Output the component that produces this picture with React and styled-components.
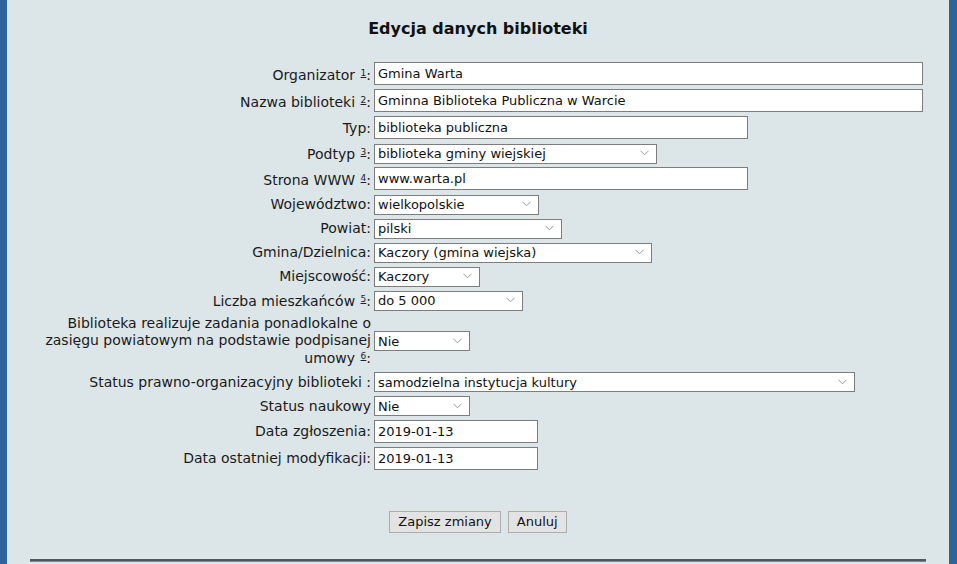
import React from "react";
import styled, { createGlobalStyle } from "styled-components";

const GlobalStyle = createGlobalStyle`
  html, body {
    margin: 0;
    padding: 0;
    background: #dce6e9;
  }
  body {
    font-family: "DejaVu Sans", Verdana, sans-serif;
    color: #111;
  }
`;

const Page = styled.div`
  display: flex;
  min-height: 564px;
  background: #dce6e9;
`;

const SideBar = styled.div`
  flex: 0 0 ${(p) => p.w}px;
  background: #2f6499;
`;

const Content = styled.div`
  flex: 1;
  display: flex;
  flex-direction: column;
`;

const Title = styled.h2`
  margin: 0;
  padding-top: 18px;
  font-size: 16px;
  line-height: 22px;
  font-weight: bold;
  text-align: center;
  color: #111;
`;

const FormGrid = styled.div`
  display: grid;
  grid-template-columns: 327px 1fr;
  column-gap: 3px;
  row-gap: 2px;
  margin: 21px 0 0 37px;
`;

const Label = styled.div`
  align-self: center;
  text-align: right;
  white-space: nowrap;
  font-size: 14px;
  line-height: ${(p) => (p.multi ? "16.5px" : "16px")};
  padding: ${(p) => (p.multi ? "2px 0" : "1px 0")};
  color: #1a1a1a;
`;

const Note = styled.a`
  font-size: 9px;
  vertical-align: 4px;
  text-decoration: underline;
  color: #222;
  margin-left: 1px;
`;

const Cell = styled.div`
  align-self: center;
  padding: 1px 0;
  display: flex;
`;

const TextInput = styled.input`
  box-sizing: border-box;
  width: ${(p) => p.w}px;
  height: 23px;
  border: 1px solid #7d7d7d;
  background: #fff;
  padding: 0 3px;
  font-family: "DejaVu Sans", Verdana, sans-serif;
  font-size: 13px;
  color: #111;
  outline: none;
`;

const SelectWrap = styled.span`
  position: relative;
  display: inline-block;
  width: ${(p) => p.w}px;
  height: 20px;
`;

const Select = styled.select`
  appearance: none;
  -webkit-appearance: none;
  box-sizing: border-box;
  width: 100%;
  height: 20px;
  border: 1px solid #7d7d7d;
  border-radius: 0;
  background: #fff;
  padding: 0 18px 0 3px;
  font-family: "DejaVu Sans", Verdana, sans-serif;
  font-size: 13px;
  color: #111;
  outline: none;
`;

const Chevron = styled.svg`
  position: absolute;
  right: 8px;
  top: 7px;
  pointer-events: none;
`;

const Buttons = styled.div`
  display: flex;
  justify-content: center;
  gap: 7px;
  margin-top: 40px;
`;

const Button = styled.button`
  height: 22px;
  padding: 0 8px;
  background: #e3e3e3;
  border: 1px solid #adadad;
  border-radius: 0;
  font-family: "DejaVu Sans", Verdana, sans-serif;
  font-size: 13px;
  color: #111;
`;

const Rule = styled.hr`
  margin: 26px 23px 0 23px;
  height: 0;
  border: none;
  border-top: 2px solid #4f5862;
  border-bottom: 1px solid #7c858e;
`;

function Dropdown({ w, value }) {
  return (
    <SelectWrap w={w}>
      <Select defaultValue={value}>
        <option>{value}</option>
      </Select>
      <Chevron width="9" height="6" viewBox="0 0 9 6">
        <path d="M0.5 0.8 L4.5 4.8 L8.5 0.8" fill="none" stroke="#999" strokeWidth="1" />
      </Chevron>
    </SelectWrap>
  );
}

const fields = [
  { label: "Organizator", note: "1", type: "text", w: 549, value: "Gmina Warta" },
  { label: "Nazwa biblioteki", note: "2", type: "text", w: 549, value: "Gminna Biblioteka Publiczna w Warcie" },
  { label: "Typ", type: "text", w: 374, value: "biblioteka publiczna" },
  { label: "Podtyp", note: "3", type: "select", w: 283, value: "biblioteka gminy wiejskiej" },
  { label: "Strona WWW", note: "4", type: "text", w: 374, value: "www.warta.pl" },
  { label: "Województwo", type: "select", w: 165, value: "wielkopolskie" },
  { label: "Powiat", type: "select", w: 188, value: "pilski" },
  { label: "Gmina/Dzielnica", type: "select", w: 278, value: "Kaczory (gmina wiejska)" },
  { label: "Miejscowość", type: "select", w: 106, value: "Kaczory" },
  { label: "Liczba mieszkańców", note: "5", type: "select", w: 149, value: "do 5 000" },
  {
    label: ["Biblioteka realizuje zadania ponadlokalne o", "zasięgu powiatowym na podstawie podpisanej", "umowy"],
    note: "6",
    type: "select",
    w: 96,
    value: "Nie",
  },
  { label: "Status prawno-organizacyjny biblioteki ", type: "select", w: 481, value: "samodzielna instytucja kultury" },
  { label: "Status naukowy", noColon: true, type: "select", w: 96, value: "Nie" },
  { label: "Data zgłoszenia", type: "text", w: 164, value: "2019-01-13" },
  { label: "Data ostatniej modyfikacji", type: "text", w: 164, value: "2019-01-13" },
];

function FieldLabel({ f }) {
  const multi = Array.isArray(f.label);
  const lines = multi ? f.label : [f.label];
  return (
    <Label multi={multi}>
      {lines.map((line, i) => (
        <React.Fragment key={i}>
          {i > 0 && <br />}
          {line}
          {i === lines.length - 1 && (
            <>
              {f.note && (
                <>
                  {" "}
                  <Note>{f.note}</Note>
                </>
              )}
              {!f.noColon && ":"}
            </>
          )}
        </React.Fragment>
      ))}
    </Label>
  );
}

export default function App() {
  return (
    <>
      <GlobalStyle />
      <Page>
        <SideBar w={7} />
        <Content>
          <Title>Edycja danych biblioteki</Title>
          <FormGrid>
            {fields.map((f, i) => (
              <React.Fragment key={i}>
                <FieldLabel f={f} />
                <Cell>
                  {f.type === "text" ? (
                    <TextInput w={f.w} defaultValue={f.value} />
                  ) : (
                    <Dropdown w={f.w} value={f.value} />
                  )}
                </Cell>
              </React.Fragment>
            ))}
          </FormGrid>
          <Buttons>
            <Button>Zapisz zmiany</Button>
            <Button>Anuluj</Button>
          </Buttons>
          <Rule />
        </Content>
        <SideBar w={8} />
      </Page>
    </>
  );
}
